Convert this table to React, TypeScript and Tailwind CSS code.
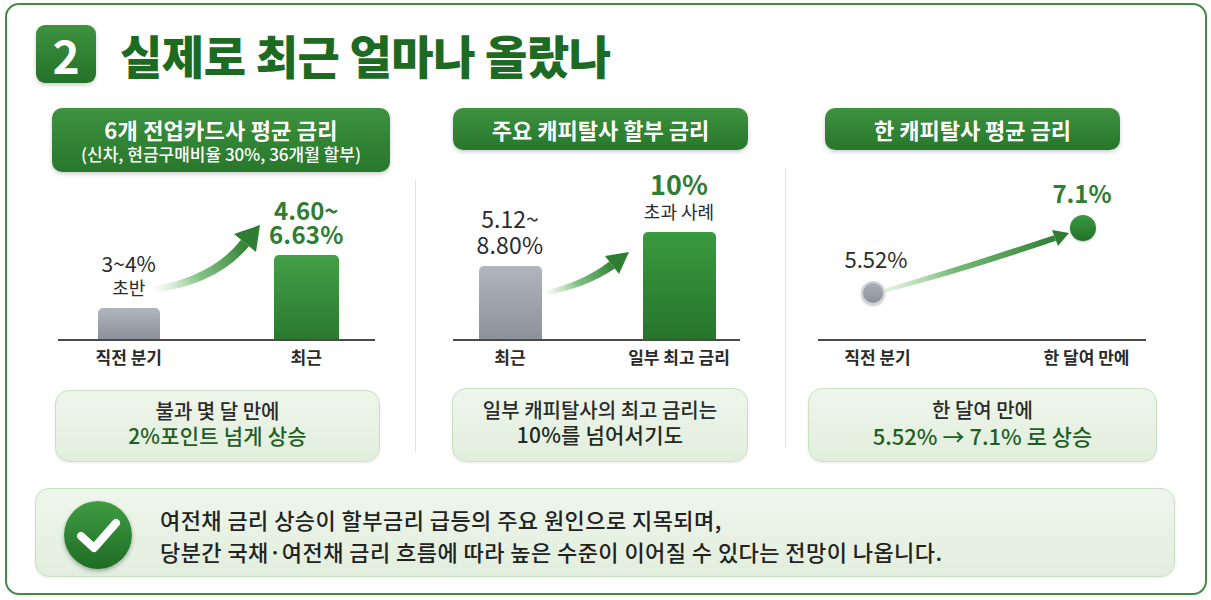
export default function App() {
  const pill =
    "rounded-[10px] bg-linear-to-b from-[#3d923f] to-[#28772c] shadow-[0_2px_4px_rgba(0,0,0,0.2)] flex flex-col items-center justify-center text-white";
  const summary =
    "rounded-[14px] border border-[#c9dfc3] bg-linear-to-b from-[#eef6eb] to-[#e2eedd] shadow-[0_1px_3px_rgba(0,0,0,0.08)] flex flex-col items-center justify-center pb-[6px]";
  const axis = "text-[17px] font-bold leading-[24px] text-[#2a2a2a] text-center whitespace-nowrap";
  return (
    <div className="w-[1211px] h-[600px] bg-white pt-[3px] pl-[5px] font-['Noto_Sans_CJK_KR','Noto_Sans',sans-serif]">
      <div className="w-[1202px] h-[592px] rounded-[14px] border-2 border-[#3f8c42] bg-white pt-[20px] flex flex-col">
        {/* Title */}
        <div className="flex items-center pl-[29px] h-[58px]">
          <div className="w-[60px] h-[58px] rounded-[9px] bg-linear-to-b from-[#3d923f] to-[#25722a] shadow-[0_2px_4px_rgba(0,0,0,0.2)] flex items-center justify-center text-white text-[46px] font-bold leading-none">
            2
          </div>
          <h1 className="ml-[24px] text-[46px] font-black leading-none text-[#1d6b23] tracking-[-0.01em]">
            실제로 최근 얼마나 올랐나
          </h1>
        </div>

        {/* Columns */}
        <div className="flex items-start mt-[25px] pl-[23px]">
          {/* Column 1 */}
          <div className="w-[385px] flex flex-col">
            <div className="h-[64px]">
              <div className={`ml-[22px] w-[338px] h-[64px] ${pill}`}>
                <div className="text-[22px] font-bold leading-[27px] tracking-[0.01em]">6개 전업카드사 평균 금리</div>
                <div className="text-[17px] font-medium leading-[22px]">(신차, 현금구매비율 30%, 36개월 할부)</div>
              </div>
            </div>
            <div className="relative ml-[28px] w-[317px] h-[169px] border-b-2 border-[#4a4a4a] flex items-end pl-[2px] gap-[40px]">
              <svg className="absolute left-0 top-0 pointer-events-none" width="317" height="167" viewBox="0 0 317 167" overflow="visible">
                <defs>
                  <linearGradient id="ga1" gradientUnits="userSpaceOnUse" x1="94" y1="118" x2="190" y2="70">
                    <stop offset="0" stopColor="#8fcf8c" stopOpacity="0" />
                    <stop offset="0.45" stopColor="#5aae5c" stopOpacity="0.75" />
                    <stop offset="1" stopColor="#2e7d32" />
                  </linearGradient>
                </defs>
                <path d="M94,115 Q155,104 183.1,67.8 L190.9,74.2 Q159,113 94,121 Z" fill="url(#ga1)" />
                <polygon points="202,53 198,80 176,62" fill="#2e7d32" />
              </svg>
              <div className="w-[140px] flex flex-col items-center text-[#2a2a2a]">
                <div className="text-[21px] leading-[25px]">3~4%</div>
                <div className="text-[18px] leading-[22px]">초반</div>
                <div className="mt-[10px] w-[62px] h-[31px] rounded-t-[5px] bg-linear-to-b from-[#b1b5bd] to-[#8c919b]" />
              </div>
              <div className="w-[140px] flex flex-col items-center text-[#2e7d32]">
                <div className="text-[24px] font-bold leading-[24px]">4.60~</div>
                <div className="text-[24px] font-bold leading-[24px] tracking-[0.01em]">6.63%</div>
                <div className="mt-[9px] w-[65px] h-[84px] rounded-t-[5px] bg-linear-to-b from-[#43a047] to-[#2a7a2e]" />
              </div>
            </div>
            <div className="ml-[28px] w-[317px] flex pl-[2px] gap-[40px] mt-[4px]">
              <div className={`w-[140px] ${axis}`}>직전 분기</div>
              <div className={`w-[140px] ${axis}`}>최근</div>
            </div>
            <div className={`mt-[21px] ml-[25px] w-[325px] h-[72px] ${summary}`}>
              <div className="text-[20px] font-medium leading-[25px] text-[#2b2b2b]">불과 몇 달 만에</div>
              <div className="text-[21px] font-medium leading-[25px] text-[#1f5f24] tracking-[0.01em]">2%포인트 넘게 상승</div>
            </div>
          </div>

          <div className="w-px h-[272px] mt-[72px] bg-[#dfe2df]" />

          {/* Column 2 */}
          <div className="w-[369px] flex flex-col">
            <div className="h-[64px]">
              <div className={`ml-[37px] w-[295px] h-[42px] ${pill}`}>
                <div className="text-[22px] font-bold leading-[26px]">주요 캐피탈사 할부 금리</div>
              </div>
            </div>
            <div className="relative ml-[37px] w-[287px] h-[169px] border-b-2 border-[#4a4a4a] flex items-end pl-[2px] gap-[59px]">
              <svg className="absolute left-0 top-0 pointer-events-none" width="287" height="167" viewBox="0 0 287 167" overflow="visible">
                <defs>
                  <linearGradient id="ga2" gradientUnits="userSpaceOnUse" x1="90" y1="121" x2="162" y2="92">
                    <stop offset="0" stopColor="#8fcf8c" stopOpacity="0" />
                    <stop offset="0.45" stopColor="#5aae5c" stopOpacity="0.75" />
                    <stop offset="1" stopColor="#2e7d32" />
                  </linearGradient>
                </defs>
                <path d="M90,119 Q130,110 156.3,89.4 L161.7,96.6 Q134,116 90,124 Z" fill="url(#ga2)" />
                <polygon points="176,80 166,102 152,84" fill="#2e7d32" />
              </svg>
              <div className="w-[110px] flex flex-col items-center text-[#2a2a2a]">
                <div className="text-[23px] leading-[26px]">5.12~</div>
                <div className="text-[23px] leading-[26px] tracking-[0.01em]">8.80%</div>
                <div className="mt-[9px] w-[63px] h-[73px] rounded-t-[5px] bg-linear-to-b from-[#b1b5bd] to-[#8c919b]" />
              </div>
              <div className="w-[110px] flex flex-col items-center">
                <div className="text-[27px] font-bold leading-[32px] text-[#2e7d32]">10%</div>
                <div className="text-[18px] leading-[22px] text-[#2a2a2a]">초과 사례</div>
                <div className="mt-[10px] w-[73px] h-[107px] rounded-t-[5px] bg-linear-to-b from-[#3a9a3e] to-[#26752b]" />
              </div>
            </div>
            <div className="ml-[37px] w-[287px] flex pl-[2px] gap-[59px] mt-[4px]">
              <div className={`w-[110px] ${axis}`}>최근</div>
              <div className={`w-[110px] ${axis}`}>일부 최고 금리</div>
            </div>
            <div className={`mt-[19px] ml-[36px] w-[296px] h-[74px] ${summary}`}>
              <div className="text-[20px] font-medium leading-[25px] text-[#2b2b2b]">일부 캐피탈사의 최고 금리는</div>
              <div className="text-[21px] font-medium leading-[25px] text-[#222a22] tracking-[0.01em]">10%를 넘어서기도</div>
            </div>
          </div>

          <div className="w-px h-[280px] mt-[60px] bg-[#dfe2df]" />

          {/* Column 3 */}
          <div className="w-[375px] flex flex-col">
            <div className="h-[64px]">
              <div className={`ml-[39px] w-[295px] h-[42px] ${pill}`}>
                <div className="text-[22px] font-bold leading-[26px]">한 캐피탈사 평균 금리</div>
              </div>
            </div>
            <div className="relative ml-[32px] w-[328px] h-[169px] border-b-2 border-[#4a4a4a]">
              <svg className="absolute left-0 top-0 pointer-events-none" width="328" height="167" viewBox="0 0 328 167" overflow="visible">
                <defs>
                  <linearGradient id="ga3" gradientUnits="userSpaceOnUse" x1="67" y1="118" x2="240" y2="64">
                    <stop offset="0" stopColor="#9fd59c" stopOpacity="0.3" />
                    <stop offset="0.4" stopColor="#5aae5c" stopOpacity="0.85" />
                    <stop offset="1" stopColor="#2e7d32" />
                  </linearGradient>
                </defs>
                <path d="M67,116.5 Q140,95 236.1,63.3 L237.9,68.7 Q144,101 67,120.5 Z" fill="url(#ga3)" />
                <polygon points="251,61 240,74 234,58" fill="#2e7d32" />
              </svg>
              <div className="absolute left-[43px] top-[109px] w-[24px] h-[24px] rounded-full bg-linear-to-b from-[#a9adb5] to-[#8c919b] border-2 border-[#cfd2d6] shadow-[0_1px_2px_rgba(0,0,0,0.25)]" />
              <div className="absolute left-[252px] top-[43px] w-[26px] h-[26px] rounded-full bg-linear-to-b from-[#3a9a3e] to-[#22702a] shadow-[0_1px_2px_rgba(0,0,0,0.25)]" />
              <div className="absolute left-[8px] top-[72px] w-[100px] text-center text-[22px] leading-[28px] text-[#2a2a2a]">5.52%</div>
              <div className="absolute left-[214px] top-[7px] w-[100px] text-center text-[24px] font-bold leading-[28px] text-[#2e7d32]">7.1%</div>
            </div>
            <div className="ml-[32px] w-[328px] flex gap-[90px] mt-[4px]">
              <div className={`w-[120px] ${axis}`}>직전 분기</div>
              <div className={`w-[120px] ${axis}`}>한 달여 만에</div>
            </div>
            <div className={`mt-[19px] ml-[22px] w-[349px] h-[74px] ${summary}`}>
              <div className="text-[20px] font-medium leading-[25px] text-[#2b2b2b]">한 달여 만에</div>
              <div className="text-[22px] font-medium leading-[26px] text-[#1f5f24]">5.52% → 7.1% 로 상승</div>
            </div>
          </div>
        </div>

        {/* Bottom note */}
        <div className="mt-[26px] ml-[28px] w-[1140px] h-[89px] rounded-[14px] border border-[#c9dfc3] bg-linear-to-b from-[#eef6eb] to-[#e2eedd] shadow-[0_1px_3px_rgba(0,0,0,0.08)] flex items-center pl-[28px] pt-[5px]">
          <div className="w-[68px] h-[68px] rounded-full bg-linear-to-b from-[#3f9c43] to-[#1f6d24] shadow-[0_2px_4px_rgba(0,0,0,0.3)] flex items-center justify-center shrink-0">
            <svg width="68" height="68" viewBox="0 0 68 68">
              <polyline points="17,35 30,47 52,22" fill="none" stroke="#ffffff" strokeWidth="8" strokeLinecap="round" strokeLinejoin="round" />
            </svg>
          </div>
          <div className="ml-[28px] text-[22px] font-medium leading-[32px] text-[#222222] tracking-[0.02em]">
            <div>여전채 금리 상승이 할부금리 급등의 주요 원인으로 지목되며,</div>
            <div>당분간 국채·여전채 금리 흐름에 따라 높은 수준이 이어질 수 있다는 전망이 나옵니다.</div>
          </div>
        </div>
      </div>
    </div>
  );
}
